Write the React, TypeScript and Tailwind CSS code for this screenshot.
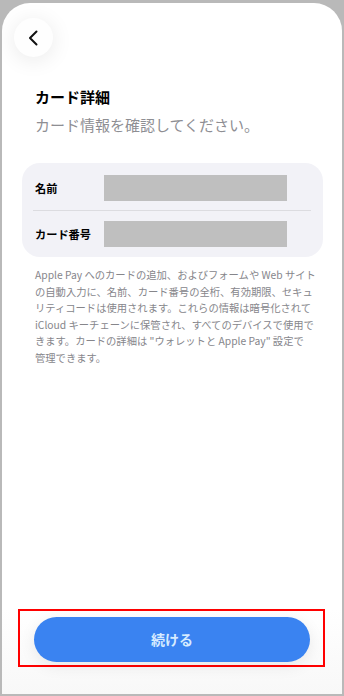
const FONT = "font-['Noto_Sans_CJK_JP','Noto_Sans',sans-serif]";

const NOTE_LINES = [
  "Apple Pay へのカードの追加、およびフォームや Web サイト",
  "の自動入力に、名前、カード番号の全桁、有効期限、セキュ",
  "リティコードは使用されます。これらの情報は暗号化されて",
  "iCloud キーチェーンに保管され、すべてのデバイスで使用で",
  "きます。カードの詳細は \"ウォレットと Apple Pay\" 設定で",
  "管理できます。",
];

const FIELDS = [{ label: "名前" }, { label: "カード番号" }];

const App = () => {
  return (
    <div className={`w-[344px] h-[696px] bg-[#b9b9b9] pt-[3px] px-[2px] pb-[2px] flex ${FONT}`}>
      <div className="flex-1 bg-white rounded-t-[28px] flex flex-col overflow-hidden">
        {/* Back button */}
        <div className="pt-[15px] pl-[12px]">
          <button className="w-[39px] h-[39px] rounded-full bg-[#fefefe] shadow-[0_3px_22px_rgba(0,0,0,0.09)] flex items-center justify-center">
            <svg width="14" height="16" viewBox="0 0 14 16" fill="none">
              <path d="M9.5 1.5 L3 8 L9.5 14.5" stroke="#111" strokeWidth="2" strokeLinecap="round" strokeLinejoin="round" />
            </svg>
          </button>
        </div>

        {/* Heading */}
        <div className="pl-[33px] mt-[30px]">
          <h1 className="text-[15px] leading-[20px] font-bold text-black">カード詳細</h1>
          <p className="mt-[8px] text-[15px] leading-[20px] text-[#8e8e93]">
            カード情報を確認してください。
          </p>
        </div>

        {/* Card fields */}
        <div className="mt-[28px] ml-[20px] w-[301px] rounded-[18px] bg-[#f2f2f7] pt-[12px] pb-[10px]">
          {FIELDS.map((f, i) => (
            <div key={f.label}>
              {i > 0 && <div className="ml-[11px] mr-[12px] h-px bg-[#dcdce0] mt-[9px] mb-[10px]" />}
              <div className="flex items-center pl-[13px]">
                <span className="w-[69px] text-[11.2px] leading-[16px] font-bold text-black whitespace-nowrap">
                  {f.label}
                </span>
                <div className="w-[183px] h-[26px] bg-[#bfbfbf]" />
              </div>
            </div>
          ))}
        </div>

        {/* Note */}
        <div className="mt-[10px] pl-[33px] text-[10.3px] leading-[16.6px] text-[#86868b]">
          {NOTE_LINES.map((l) => (
            <div key={l} className="whitespace-nowrap">
              {l}
            </div>
          ))}
        </div>

        <div className="flex-1" />

        {/* Continue button (highlighted) */}
        <div className="bg-gradient-to-b from-white to-[#f8f8f8] pb-[27px]">
          <div className="ml-[16px] mr-[17px] border-2 border-[#ff0000] pt-[6px] pb-[3px] pl-[14px] pr-[13px]">
            <button className="w-full h-[45px] rounded-full bg-[#3a83f1] shadow-[0_4px_16px_rgba(0,0,0,0.08)] text-[14px] font-bold text-[#d6ebff]">
              続ける
            </button>
          </div>
        </div>
      </div>
    </div>
  );
};

export default App;
